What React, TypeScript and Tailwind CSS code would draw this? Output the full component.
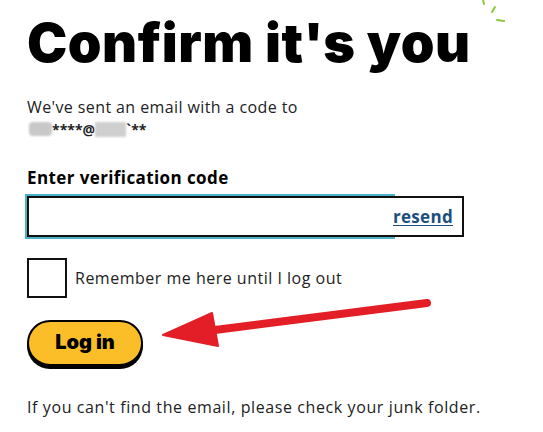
import React from "react";

export default function App() {
  return (
    <div className="relative w-[543px] h-[432px] bg-white overflow-hidden text-[#1a1a1a]" style={{ fontFamily: "'Open Sans', 'Liberation Sans', sans-serif" }}>
      {/* sparkle */}
      <svg className="absolute left-[476px] top-0" width="40" height="28" viewBox="0 0 40 28">
        <g stroke="#8cc63f" strokeWidth="2" strokeLinecap="round" fill="none">
          <line x1="7" y1="0" x2="8" y2="4" />
          <line x1="16" y1="12" x2="19" y2="7" />
          <line x1="21" y1="20" x2="28" y2="21" />
        </g>
      </svg>
      {/* arrow */}
      <svg className="absolute left-0 top-0 pointer-events-none" width="543" height="432">
        <line x1="215" y1="330" x2="427" y2="303" stroke="#e31e26" strokeWidth="8" strokeLinecap="round" />
        <polygon points="163,335 212,313 218,346" fill="#e31e26" stroke="#e31e26" strokeWidth="2" strokeLinejoin="round" />
      </svg>

      <div className="flex flex-col px-[27px] pt-[16px]">
        <h1 className="text-[54px] leading-none font-black text-black tracking-[0.5px]" style={{ fontFamily: "Inter, 'Liberation Sans', sans-serif" }}>
          Confirm it's you
        </h1>
        <p className="mt-[25px] text-[16px] leading-[24px] text-[#222] tracking-[0.4px]">We've sent an email with a code to</p>
        <div className="mt-[2px] flex items-center h-[16px] text-[14px] font-bold text-[#222]">
          <span className="inline-block w-[23px] h-[14px] bg-[#c8c8c8] blur-[1px] rounded-sm ml-[2px]" />
          <span>****@</span>
          <span className="inline-block w-[31px] h-[15px] bg-[#cfcfcf] blur-[1px]" />
          <span>`**</span>
        </div>
        <label className="mt-[31px] text-[17px] leading-[20px] font-bold text-black tracking-[0.4px]">Enter verification code</label>
        <div className="relative mt-[8px] w-[437px] h-[41px]">
          <div className="absolute left-[-2px] top-[-2px] w-[370px] h-[45px] bg-[#4bb3c8]" />
          <div className="relative flex items-center justify-end w-full h-full border-2 border-[#111] bg-white pr-[9px]">
            <span className="text-[17px] font-bold text-[#1d4f7c] underline underline-offset-2 tracking-[0.3px]">resend</span>
          </div>
        </div>
        <div className="mt-[21px] flex items-center gap-[8px]">
          <div className="w-[40px] h-[40px] border-2 border-[#111]" />
          <span className="text-[16px] text-[#222] tracking-[0.5px]">Remember me here until I log out</span>
        </div>
        <button className="mt-[22px] w-[116px] h-[46px] rounded-full border-2 border-black bg-[#fbbd28] shadow-[0_3px_0_0_#000] text-[20px] font-black text-black flex items-center justify-center pb-[2px]" style={{ fontFamily: "Inter, 'Liberation Sans', sans-serif" }}>
          Log in
        </button>
        <p className="mt-[31px] text-[16px] leading-[20px] text-[#222] tracking-[0.6px]">If you can't find the email, please check your junk folder.</p>
      </div>
    </div>
  );
}
